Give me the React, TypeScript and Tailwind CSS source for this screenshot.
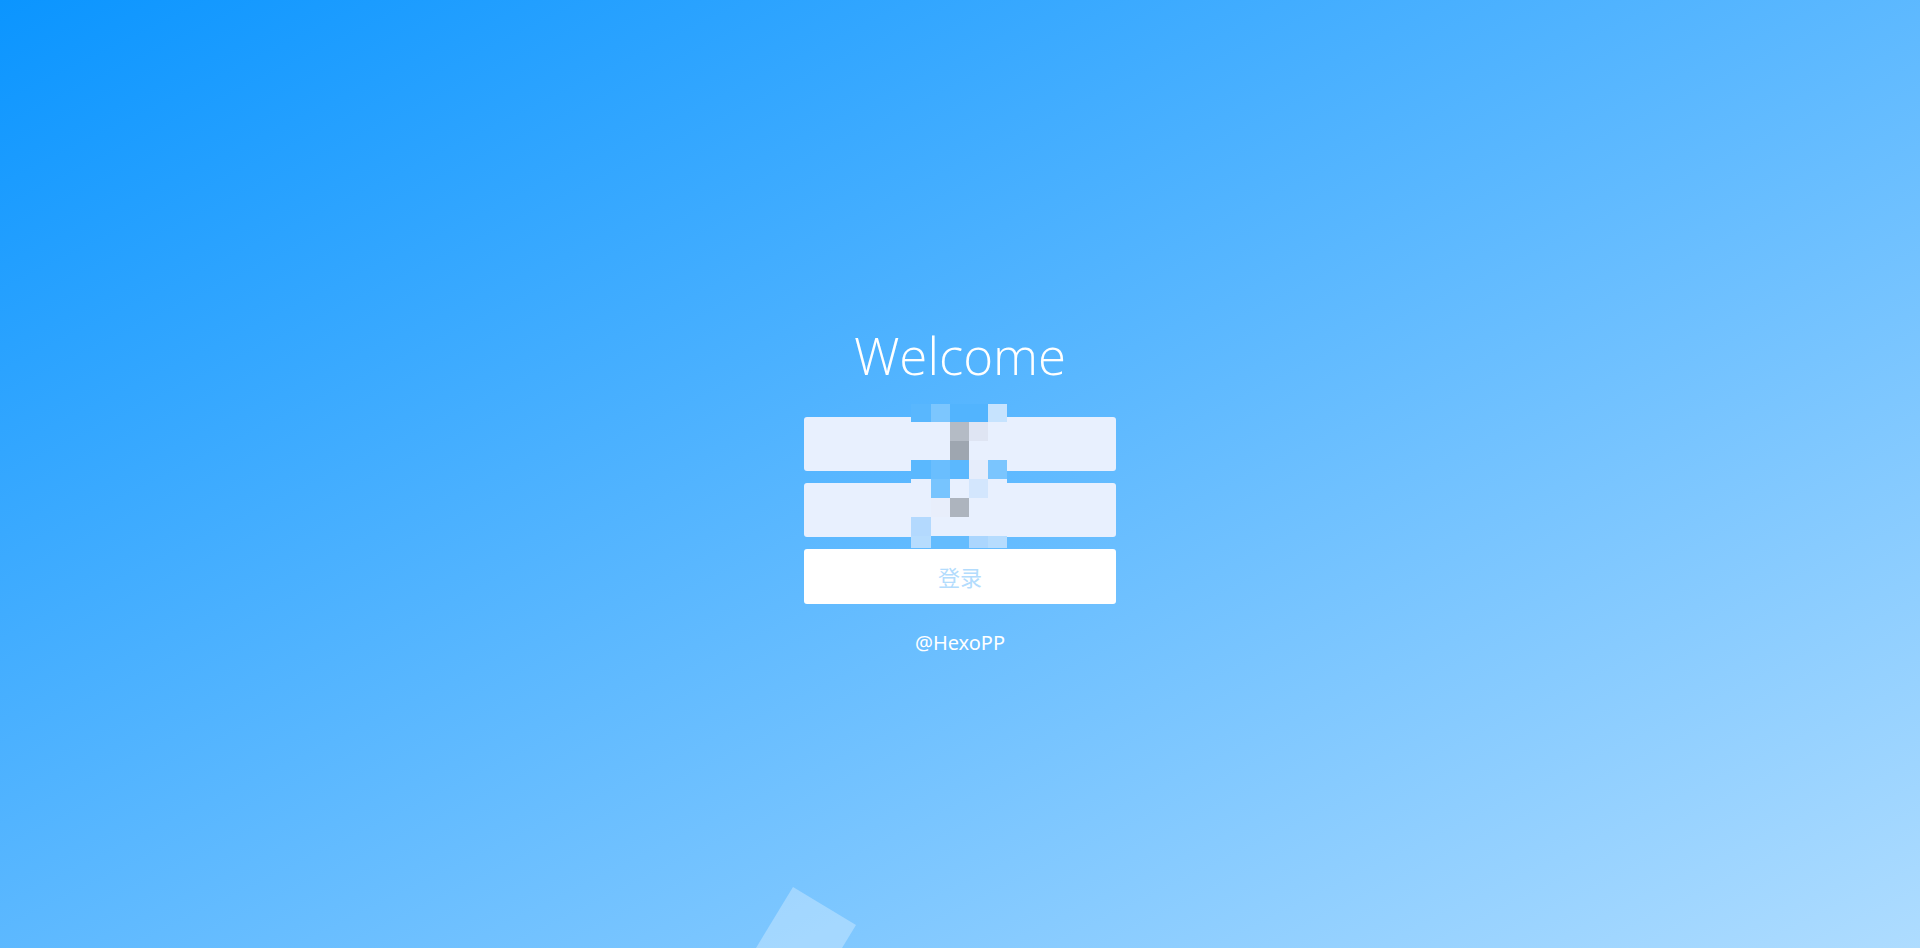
import React from "react";

// pixelated patch that sits over the two inputs in the screenshot
const mosaic: string[][] = [
  ["bg-[#59b7fe]", "bg-[#7cc6fe]", "bg-[#52b4fe]", "bg-[#52b4fe]", "bg-[#c6e3fe]"],
  ["bg-[#e8f0fe]", "bg-[#e8f0fe]", "bg-[#b4bbc5]", "bg-[#dfe5f3]", "bg-[#e8f0fe]"],
  ["bg-[#e8f0fe]", "bg-[#e8f0fe]", "bg-[#9ea6b0]", "bg-[#e8f0fe]", "bg-[#e8f0fe]"],
  ["bg-[#5ab8fe]", "bg-[#6abefe]", "bg-[#5bb8fe]", "bg-[#e6edfb]", "bg-[#7ac5fe]"],
  ["bg-[#e8f0fe]", "bg-[#77c4fe]", "bg-[#e8f0fe]", "bg-[#d3e6fd]", "bg-[#e8f0fe]"],
  ["bg-[#e8f0fe]", "bg-[#e8eefb]", "bg-[#adb4be]", "bg-[#e8f0fe]", "bg-[#e8f0fe]"],
  ["bg-[#b3d9fe]", "bg-[#e8f0fe]", "bg-[#e8f0fe]", "bg-[#e8f0fe]", "bg-[#e8f0fe]"],
  ["bg-[#b6dcfe]", "bg-[#64bcfe]", "bg-[#64bcfe]", "bg-[#abd6fe]", "bg-[#b6dcfe]"],
];

const Mosaic = () => (
  <div className="absolute left-[107px] top-[-13px] grid w-[96px] grid-cols-[20px_19px_19px_19px_19px] grid-rows-[18px_19px_19px_19px_19px_19px_19px_12px]">
    {mosaic.map((row, i) =>
      row.map((cls, j) => <div key={`${i}-${j}`} className={cls}></div>)
    )}
  </div>
);

const App = () => {
  return (
    <div className="relative h-screen w-full overflow-hidden bg-linear-to-br/srgb from-[#0b95ff] to-[#aedcff]">
      <div className="flex flex-col items-center pt-[330px]">
        <h1 className="font-['Open_Sans',sans-serif] text-[51px] font-light leading-none text-white">
          Welcome
        </h1>

        <form className="relative mt-[36px] flex w-[312px] flex-col gap-3">
          <input
            type="text"
            className="h-[54px] w-full rounded-[3px] bg-[#e8f0fe] px-4 outline-none"
          />
          <input
            type="password"
            className="h-[54px] w-full rounded-[3px] bg-[#e8f0fe] px-4 outline-none"
          />
          <button
            type="button"
            className="h-[55px] w-full rounded-[3px] bg-white font-['Noto_Sans_CJK_SC',sans-serif] text-[22px] text-[#b3dcfd]"
          >
            登录
          </button>
          <Mosaic />
        </form>

        <p className="mt-[29px] font-['Noto_Sans',sans-serif] text-[20px] leading-none text-white">
          @HexoPP
        </p>
      </div>

      {/* tilted light shape at the bottom */}
      <svg
        className="absolute left-[740px] top-[880px]"
        width="130"
        height="68"
        viewBox="0 0 130 68"
      >
        <polygon points="53,7 116,45 102,68 16,68" fill="#ffffff" fillOpacity="0.3" />
      </svg>
    </div>
  );
};

export default App;
